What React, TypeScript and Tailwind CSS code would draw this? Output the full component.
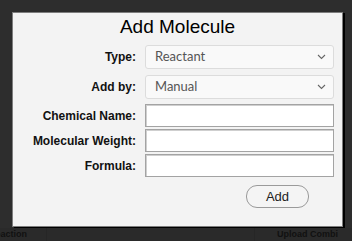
import React from "react";

function Chevron() {
  return (
    <svg width="9" height="6" viewBox="0 0 9 6" className="mr-[7px]">
      <path d="M1 1 L4.5 4.5 L8 1" fill="none" stroke="#666" strokeWidth="1.1" />
    </svg>
  );
}

function SelectBox({ value }: { value: string }) {
  return (
    <div className="flex h-[24px] w-[189px] items-center justify-between rounded-[3px] border border-[#dcdcdc] bg-[#f9f9f9] pl-[9px] text-[13px] text-[#555] [font-family:Lato,'Noto_Sans',sans-serif]">
      <span>{value}</span>
      <Chevron />
    </div>
  );
}

function TextBox() {
  return (
    <div className="h-[23px] w-[189px] border border-[#a3a3a3] bg-white shadow-[inset_1px_1px_0_#cfcfcf]" />
  );
}

function Label({ children }: { children: React.ReactNode }) {
  return (
    <div className="w-[123px] text-right text-[12px] font-bold text-[#111] [font-family:'Liberation_Sans',Arial,sans-serif]">
      {children}
    </div>
  );
}

export default function App() {
  return (
    <div className="relative flex h-[241px] w-[352px] flex-col overflow-hidden bg-[#2d2d2d]">
      <div className="flex-1" />
      <div className="flex h-[13px] items-start bg-[#2a2a2a] text-[9px] font-bold leading-[11px] text-[#111] [font-family:'Liberation_Sans',Arial,sans-serif]">
        <div className="flex h-full w-[47px] items-start justify-end overflow-hidden border-r border-[#262626] pr-[19px] pt-[1px]">
          <span className="whitespace-nowrap">Reaction</span>
        </div>
        <div className="h-full w-[208px] border-r border-[#262626]" />
        <div className="flex h-full w-[83px] items-start overflow-hidden pl-[22px] pt-[1px]">
          <span className="whitespace-nowrap">Upload Combined</span>
        </div>
      </div>

      <div className="absolute left-[12px] top-[12px] flex h-[215px] w-[331px] flex-col border border-[#7d7d7d] bg-[#f3f3f3] shadow-[2px_1px_0_#000]">
        <div className="mt-[3px] h-[22px] text-center text-[19px] leading-[22px] text-black [font-family:'Liberation_Sans',Arial,sans-serif]">
          Add Molecule
        </div>
        <div className="mt-[7px] flex flex-col">
          <div className="flex items-center gap-[9px]">
            <Label>Type:</Label>
            <SelectBox value="Reactant" />
          </div>
          <div className="mt-[6px] flex items-center gap-[9px]">
            <Label>Add by:</Label>
            <SelectBox value="Manual" />
          </div>
          <div className="mt-[5px] flex items-center gap-[9px]">
            <Label>Chemical Name:</Label>
            <TextBox />
          </div>
          <div className="mt-[2px] flex items-center gap-[9px]">
            <Label>Molecular Weight:</Label>
            <TextBox />
          </div>
          <div className="mt-[2px] flex items-center gap-[9px]">
            <Label>Formula:</Label>
            <TextBox />
          </div>
          <div className="mt-[8px] flex justify-end pr-[33px]">
            <div className="flex h-[23px] w-[63px] items-center justify-center rounded-[11px] border-[1.5px] border-[#9a9a9a] bg-[#f4f4f4] text-[13px] text-[#222] [font-family:'Liberation_Sans',Arial,sans-serif]">
              Add
            </div>
          </div>
        </div>
      </div>
    </div>
  );
}
